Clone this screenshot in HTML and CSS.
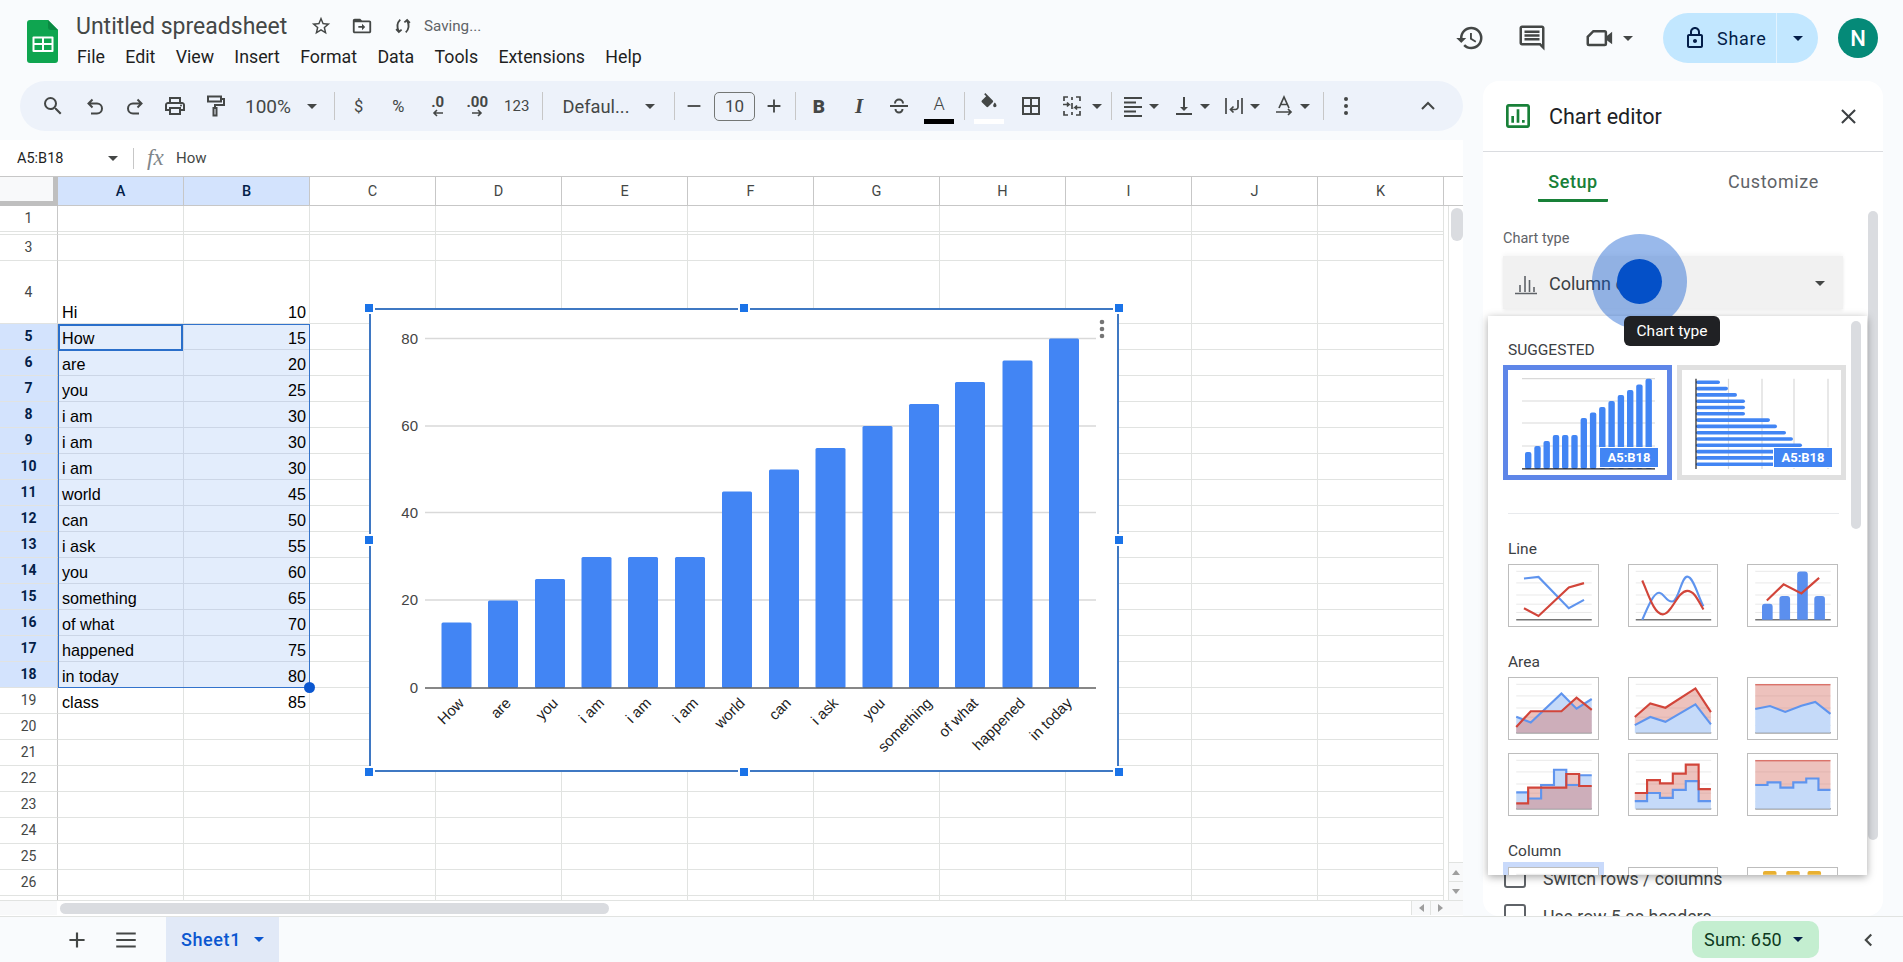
FILE: index.html
```html
<!DOCTYPE html>
<html lang="en">
<head>
<meta charset="utf-8">
<title>Untitled spreadsheet</title>
<link rel="stylesheet" href="styles.css">
</head>
<body>
<svg class="defs" width="0" height="0" aria-hidden="true">
  <symbol id="g5" viewBox="0 0 91 63"><path d="M7 6.5H85M7 18.5H85M7 31H85M7 40.500H85M7 49H85" stroke="#e8e8e8" stroke-width="1" fill="none"/><path d="M7 56.500H85" stroke="#757575" stroke-width="1.500" fill="none"/></symbol>
</svg>
<header class="top">
  <svg class="logo" viewBox="0 0 31 43"><path d="M3 0H21L31 10V40a3 3 0 0 1-3 3H3a3 3 0 0 1-3-3V3a3 3 0 0 1 3-3z" fill="#0fa550"/><path d="M21 0L31 10H24a3 3 0 0 1-3-3z" fill="#0a8a42"/><rect x="5.500" y="16.500" width="21" height="15.500" rx="1" fill="#fff"/><path d="M7.500 18.500h7.500v4.500h-7.500zM17 18.500h7.500v4.500H17zM7.500 25h7.500v5h-7.500zM17 25h7.500v5H17z" fill="#0fa550"/></svg>
  <div class="titles">
    <div class="title-row">
      <span class="doc-title">Untitled spreadsheet</span>
      <svg class="ti first" viewBox="0 0 24 24"><path d="M22 9.240l-7.190-.620L12 2 9.190 8.630 2 9.240l5.460 4.730L5.820 21 12 17.270 18.180 21l-1.630-7.030L22 9.240zM12 15.400l-3.760 2.270 1-4.280-3.320-2.880 4.380-.380L12 6.100l1.710 4.040 4.380.380-3.320 2.880 1 4.280L12 15.400z"/></svg>
      <svg class="ti" viewBox="0 0 24 24"><path d="M20 6h-8l-2-2H4c-1.100 0-2 .9-2 2v12c0 1.100.9 2 2 2h16c1.100 0 2-.9 2-2V8c0-1.100-.9-2-2-2zm0 12H4V8h16v10zM12 9.500l3.500 3.500-3.500 3.500V14H8v-2h4z"/></svg>
      <svg class="ti" viewBox="0 0 24 24"><path d="M9 5C6 8 5 13 7.500 18M15 19c3-3 4-8 1.500-13M4.500 15.500l3 3 3-2.500M19.500 8.500l-3-3-3 2.500" fill="none" stroke="#444746" stroke-width="2"/></svg>
      <span class="saving">Saving...</span>
    </div>
    <nav class="menu"><span>File</span><span>Edit</span><span>View</span><span>Insert</span><span>Format</span><span>Data</span><span>Tools</span><span>Extensions</span><span>Help</span></nav>
  </div>
  <div class="actions">
    <svg class="ai" viewBox="0 0 24 24"><path d="M13 3a9 9 0 0 0-9 9H1l3.890 3.890.07.14L9 12H6c0-3.870 3.130-7 7-7s7 3.130 7 7-3.130 7-7 7c-1.930 0-3.680-.79-4.940-2.060l-1.420 1.420A8.954 8.954 0 0 0 13 21a9 9 0 0 0 0-18zm-1 5v5l4.280 2.540.72-1.210-3.500-2.080V8H12z"/></svg>
    <svg class="ai ai-comment" viewBox="0 0 24 24"><path d="M20 2H4c-1.100 0-2 .9-2 2v12c0 1.100.9 2 2 2h14l4 4V4c0-1.100-.9-2-2-2zm0 15.170L18.830 16H4V4h16v13.170zM6 12h12v2H6zm0-3h12v2H6zm0-3h12v2H6z"/></svg>
    <svg class="ai ai-meet" viewBox="0 0 24 24"><path d="M7.500 6.500H16.500a1 1 0 0 1 1 1v9a1 1 0 0 1-1 1H4a1 1 0 0 1-1-1V11z" fill="none" stroke="#444746" stroke-width="2"/><path d="M18 10.500L22.500 7v10L18 13.500z"/></svg>
    <i class="caret meet-caret"></i>
    <div class="share">
      <div class="share-main">
        <svg class="lock" viewBox="0 0 24 24"><path d="M18 8h-1V6c0-2.760-2.240-5-5-5S7 3.240 7 6v2H6c-1.100 0-2 .9-2 2v10c0 1.100.9 2 2 2h12c1.100 0 2-.9 2-2V10c0-1.100-.9-2-2-2zM9 6c0-1.660 1.340-3 3-3s3 1.340 3 3v2H9V6zm9 14H6V10h12v10zm-6-3c1.100 0 2-.9 2-2s-.9-2-2-2-2 .9-2 2 .9 2 2 2z"/></svg>
        <span>Share</span>
      </div>
      <div class="share-drop"><i class="caret dark"></i></div>
    </div>
    <div class="avatar">N</div>
  </div>
</header>

<main class="main">
  <section class="left">
    <div class="toolbar">
      <span class="tb"><svg viewBox="0 0 24 24"><path d="M15.500 14h-.79l-.28-.27A6.471 6.471 0 0 0 16 9.500 6.500 6.500 0 1 0 9.500 16c1.610 0 3.090-.59 4.230-1.570l.27.28v.79l5 4.990L20.490 19l-4.990-5zm-6 0C7.010 14 5 11.990 5 9.500S7.010 5 9.500 5 14 7.010 14 9.500 11.990 14 9.500 14z"/></svg></span>
      <span class="tb m2"><svg viewBox="0 0 24 24"><path d="M9.500 5.500L5.500 9.500l4 4M5.500 9.500H14a5 5 0 0 1 0 10H8" class="st"/></svg></span>
      <span class="tb"><svg viewBox="0 0 24 24"><path d="M14.500 5.500l4 4-4 4M18.500 9.500H10a5 5 0 0 0 0 10h6" class="st"/></svg></span>
      <span class="tb"><svg viewBox="0 0 24 24"><path d="M19 8h-1V3H6v5H5c-1.660 0-3 1.340-3 3v6h4v4h12v-4h4v-6c0-1.660-1.340-3-3-3zM8 5h8v3H8V5zm8 14H8v-4h8v4zm2-4v-2H6v2H4v-4c0-.55.45-1 1-1h14c.55 0 1 .45 1 1v4h-2z"/><circle cx="18" cy="11.500" r="1"/></svg></span>
      <span class="tb"><svg viewBox="0 0 24 24"><path d="M5 2.500h13v5H5zM18 5h3v6h-9v3M10.500 14h3v7.500h-3z" class="st"/></svg></span>
      <span class="zoom-val">100%</span>
      <span class="tc z-caret"><i class="caret"></i></span>
      <i class="sep s12"></i>
      <span class="tf m4">$</span>
      <span class="tf">%</span>
      <span class="tf dec"><b>.0</b><svg viewBox="0 0 16 8"><path d="M13 4H4M7 1L4 4l3 3" class="st"/></svg></span>
      <span class="tf dec"><b>.00</b><svg viewBox="0 0 16 8"><path d="M3 4h9M9 1l3 3-3 3" class="st"/></svg></span>
      <span class="tf n123">123</span>
      <i class="sep s5"></i>
      <span class="font-name">Defaul...</span>
      <span class="tc f-caret"><i class="caret"></i></span>
      <i class="sep s14"></i>
      <span class="pm m3"><svg viewBox="0 0 24 24"><path d="M5 12h14" class="st"/></svg></span>
      <span class="fsize">10</span>
      <span class="pm m3b"><svg viewBox="0 0 24 24"><path d="M5 12h14M12 5v14" class="st"/></svg></span>
      <i class="sep s5"></i>
      <span class="tb m3"><b class="bold">B</b></span>
      <span class="tb"><i class="ital">I</i></span>
      <span class="tb"><svg viewBox="0 0 24 24"><path d="M3 12h18M8 9.500a4 4 0 0 1 8 0M8.500 15a3.500 3.500 0 0 0 7 0" class="st"/></svg></span>
      <span class="tb col-a"><span>A</span><i class="bar black"></i></span>
      <i class="sep s5"></i>
      <span class="tb m4 col-a"><svg viewBox="0 0 24 24"><path d="M16.560 8.940L7.620 0 6.210 1.410l2.380 2.380-5.150 5.150c-.59.59-.59 1.540 0 2.120l5.500 5.500c.29.29.68.44 1.060.44s.77-.15 1.060-.44l5.500-5.500c.59-.58.59-1.530 0-2.120zM19 11.500s-2 2.170-2 3.500c0 1.100.9 2 2 2s2-.9 2-2c0-1.330-2-3.500-2-3.500z"/></svg><i class="bar white"></i></span>
      <span class="tb m2"><svg viewBox="0 0 24 24"><path d="M3 3v18h18V3H3zm8 16H5v-6h6v6zm0-8H5V5h6v6zm8 8h-6v-6h6v6zm0-8h-6V5h6v6z"/></svg></span>
      <span class="pair pair-wide m5"><svg viewBox="0 0 24 24"><path d="M8 3H4v4M4 17v4h4M16 3h4v4M20 17v4h-4M3 10.500h6l-2-2M9 10.500l-2 2M21 13.500h-6l2-2M15 13.500l2 2M12 3v3M12 9v6M12 18v3" class="st"/></svg><span class="cbox"><i class="caret"></i></span></span>
      <i class="sep s3"></i>
      <span class="pair m9"><svg viewBox="0 0 24 24"><path d="M3 3h18v2H3zM3 7.500h12v2H3zM3 12h18v2H3zM3 16.500h12v2H3zM3 21h18v2H3z"/></svg><span class="cbox"><i class="caret"></i></span></span>
      <span class="pair m9"><svg viewBox="0 0 24 24"><path d="M16 13h-3V3h-2v10H8l4 4 4-4zM4 19v2h16v-2H4z"/></svg><span class="cbox"><i class="caret"></i></span></span>
      <span class="pair m8"><svg viewBox="0 0 24 24"><path d="M4 4v16M20 4v16M16 6v7a2.500 2.500 0 0 1-2.500 2.500H9M11.500 12.500l-3 3 3 3" class="st"/></svg><span class="cbox"><i class="caret"></i></span></span>
      <span class="pair m8"><svg viewBox="0 0 24 24"><path d="M7 14L12 3l5 11M8.800 10.500h6.400M4 18h15M16 15l3 3-3 3" class="st"/></svg><span class="cbox"><i class="caret"></i></span></span>
      <i class="sep s9"></i>
      <span class="dots-tb"><svg viewBox="0 0 24 24"><circle cx="12" cy="5" r="2"/><circle cx="12" cy="12" r="2"/><circle cx="12" cy="19" r="2"/></svg></span>
      <span class="chev"><svg viewBox="0 0 24 24"><path d="M6 15l6-6 6 6" class="st"/></svg></span>
    </div>

    <div class="formula">
      <span class="namebox">A5:B18</span><i class="caret nb-caret"></i>
      <i class="fsep"></i>
      <span class="fx">fx</span>
      <span class="fval">How</span>
    </div>

    <div class="sheet">
      <div class="colhead">
        <div class="corner"></div>
        <div class="ch on">A</div><div class="ch on">B</div><div class="ch">C</div><div class="ch">D</div><div class="ch">E</div><div class="ch">F</div><div class="ch">G</div><div class="ch">H</div><div class="ch">I</div><div class="ch">J</div><div class="ch">K</div>
      </div>
      <div class="body">
        <div class="grid">
          <div class="row"><div class="rh">1</div><div class="cells"></div></div>
          <div class="row hidden-row"><div class="rh"></div><div class="cells"></div></div>
          <div class="row"><div class="rh">3</div><div class="cells"></div></div>
          <div class="row tall"><div class="rh">4</div><div class="cells"><div class="c">Hi</div><div class="c n">10</div></div></div>
          <div class="row sel"><div class="rh">5</div><div class="cells"><div class="c">How</div><div class="c n">15</div></div></div>
          <div class="row sel"><div class="rh">6</div><div class="cells"><div class="c">are</div><div class="c n">20</div></div></div>
          <div class="row sel"><div class="rh">7</div><div class="cells"><div class="c">you</div><div class="c n">25</div></div></div>
          <div class="row sel"><div class="rh">8</div><div class="cells"><div class="c">i am</div><div class="c n">30</div></div></div>
          <div class="row sel"><div class="rh">9</div><div class="cells"><div class="c">i am</div><div class="c n">30</div></div></div>
          <div class="row sel"><div class="rh">10</div><div class="cells"><div class="c">i am</div><div class="c n">30</div></div></div>
          <div class="row sel"><div class="rh">11</div><div class="cells"><div class="c">world</div><div class="c n">45</div></div></div>
          <div class="row sel"><div class="rh">12</div><div class="cells"><div class="c">can</div><div class="c n">50</div></div></div>
          <div class="row sel"><div class="rh">13</div><div class="cells"><div class="c">i ask</div><div class="c n">55</div></div></div>
          <div class="row sel"><div class="rh">14</div><div class="cells"><div class="c">you</div><div class="c n">60</div></div></div>
          <div class="row sel"><div class="rh">15</div><div class="cells"><div class="c">something</div><div class="c n">65</div></div></div>
          <div class="row sel"><div class="rh">16</div><div class="cells"><div class="c">of what</div><div class="c n">70</div></div></div>
          <div class="row sel"><div class="rh">17</div><div class="cells"><div class="c">happened</div><div class="c n">75</div></div></div>
          <div class="row sel"><div class="rh">18</div><div class="cells"><div class="c">in today</div><div class="c n">80</div></div></div>
          <div class="row"><div class="rh">19</div><div class="cells"><div class="c">class</div><div class="c n">85</div></div></div>
          <div class="row"><div class="rh">20</div><div class="cells"></div></div>
          <div class="row"><div class="rh">21</div><div class="cells"></div></div>
          <div class="row"><div class="rh">22</div><div class="cells"></div></div>
          <div class="row"><div class="rh">23</div><div class="cells"></div></div>
          <div class="row"><div class="rh">24</div><div class="cells"></div></div>
          <div class="row"><div class="rh">25</div><div class="cells"></div></div>
          <div class="row"><div class="rh">26</div><div class="cells"></div></div>
          <div class="row"><div class="rh"></div><div class="cells"></div></div>

          <div class="range"><div class="active"></div><i class="fill-handle"></i></div>

          <div class="chart">
            <svg class="chart-svg" viewBox="0 0 750 464" width="750" height="464">
              <path d="M56 30.500H727M56 118H727M56 204.500H727M56 292H727" stroke="#d9d9d9" stroke-width="1.500" fill="none"/>
              <g fill="#4285f4">
                <rect x="72.500" y="314.500" width="30" height="65.500" rx="1.500"/>
                <rect x="119" y="292.500" width="30" height="87.500" rx="1.500"/>
                <rect x="166" y="271" width="30" height="109" rx="1.500"/>
                <rect x="212.500" y="249" width="30" height="131" rx="1.500"/>
                <rect x="259" y="249" width="30" height="131" rx="1.500"/>
                <rect x="306" y="249" width="30" height="131" rx="1.500"/>
                <rect x="353" y="183.500" width="30" height="196.500" rx="1.500"/>
                <rect x="400" y="161.500" width="30" height="218.500" rx="1.500"/>
                <rect x="446.500" y="140" width="30" height="240" rx="1.500"/>
                <rect x="493.500" y="118" width="30" height="262" rx="1.500"/>
                <rect x="540" y="96" width="30" height="284" rx="1.500"/>
                <rect x="586" y="74" width="30" height="306" rx="1.500"/>
                <rect x="633.500" y="52.500" width="30" height="327.500" rx="1.500"/>
                <rect x="680" y="30.500" width="30" height="349.500" rx="1.500"/>
              </g>
              <path d="M56 380H727" stroke="#5f5f5f" stroke-width="1.500" fill="none"/>
              <g class="ax-y">
                <text x="49" y="35.500">80</text><text x="49" y="123">60</text><text x="49" y="209.500">40</text><text x="49" y="297">20</text><text x="49" y="385">0</text>
              </g>
              <g class="ax-x">
                <text transform="translate(96 396) rotate(-45)">How</text>
                <text transform="translate(143 396) rotate(-45)">are</text>
                <text transform="translate(190 396) rotate(-45)">you</text>
                <text transform="translate(236 396) rotate(-45)">i am</text>
                <text transform="translate(283 396) rotate(-45)">i am</text>
                <text transform="translate(330 396) rotate(-45)">i am</text>
                <text transform="translate(377 396) rotate(-45)">world</text>
                <text transform="translate(423 396) rotate(-45)">can</text>
                <text transform="translate(470 396) rotate(-45)">i ask</text>
                <text transform="translate(517 396) rotate(-45)">you</text>
                <text transform="translate(564 396) rotate(-45)">something</text>
                <text transform="translate(610 396) rotate(-45)">of what</text>
                <text transform="translate(657 396) rotate(-45)">happened</text>
                <text transform="translate(704 396) rotate(-45)">in today</text>
              </g>
              <g fill="#757575"><circle cx="733" cy="14" r="2.300"/><circle cx="733" cy="21" r="2.300"/><circle cx="733" cy="28" r="2.300"/></g>
            </svg>
            <i class="h h-tl"></i><i class="h h-tm"></i><i class="h h-tr"></i><i class="h h-ml"></i><i class="h h-mr"></i><i class="h h-bl"></i><i class="h h-bm"></i><i class="h h-br"></i>
          </div>
        </div>
        <div class="vscroll">
          <div class="vthumb"></div>
          <div class="varrows"><span class="arr"><i class="tri up"></i></span><span class="arr"><i class="tri down"></i></span></div>
        </div>
      </div>
      <div class="hscroll">
        <div class="hleft"></div>
        <div class="htrack"><div class="hthumb"></div></div>
        <span class="arr wide"><i class="tri lt"></i></span><span class="arr wide"><i class="tri rt"></i></span><span class="arr last"></span>
      </div>
    </div>
  </section>

  <aside class="panel">
    <div class="p-head">
      <svg class="p-icon" viewBox="3 3 18 18"><path d="M19 3H5c-1.100 0-2 .9-2 2v14c0 1.100.9 2 2 2h14c1.100 0 2-.9 2-2V5c0-1.100-.9-2-2-2zm0 16H5V5h14v14zM7 12h2v5H7zm4-5h2v10h-2zm4 8h2v2h-2z"/></svg>
      <span class="p-title">Chart editor</span>
      <svg class="p-close" viewBox="0 0 24 24"><path d="M19 6.410L17.590 5 12 10.590 6.410 5 5 6.410 10.590 12 5 17.590 6.410 19 12 13.410 17.590 19 19 17.590 13.410 12z"/></svg>
    </div>
    <div class="p-tabs">
      <span class="tab on">Setup</span>
      <span class="tab cust">Customize</span>
    </div>
    <div class="p-body">
      <div class="p-label">Chart type</div>
      <div class="dropdown">
        <svg class="dd-icon" viewBox="0 0 24 24"><path d="M1 21.500h22M6 20v-7M11 20V4M15.500 20V8M20 20v-5" fill="none" stroke="#5f6368" stroke-width="1.600"/></svg>
        <span class="dd-text">Column chart</span>
        <i class="caret dd-caret"></i>
      </div>
      <label class="check first-check"><i class="box"></i><span>Switch rows / columns</span></label>
      <label class="check"><i class="box"></i><span>Use row 5 as headers</span></label>
    </div>
    <div class="p-scroll"></div>

    <div class="popup">
      <div class="pop-scroll"></div>
      <div class="pop-label">SUGGESTED</div>
      <div class="sugg">
        <div class="sg active-sg">
          <svg viewBox="0 0 159 105" width="159" height="105">
            <path d="M14 8.700H147M14 31H147M14 53H147M14 76H147" stroke="#d9d9d9" stroke-width="1.200" fill="none"/>
            <g fill="#4285f4">
              <rect x="17" y="82" width="6.400" height="17" rx="2"/><rect x="26.300" y="76" width="6.400" height="23" rx="2"/><rect x="35.500" y="71" width="6.400" height="28" rx="2"/><rect x="44.800" y="65" width="6.400" height="34" rx="2"/><rect x="54" y="65" width="6.400" height="34" rx="2"/><rect x="63.300" y="65" width="6.400" height="34" rx="2"/><rect x="72.600" y="48" width="6.400" height="51" rx="2"/><rect x="81.900" y="42.500" width="6.400" height="56.500" rx="2"/><rect x="91.100" y="37" width="6.400" height="62" rx="2"/><rect x="100.400" y="31" width="6.400" height="68" rx="2"/><rect x="109.700" y="25" width="6.400" height="74" rx="2"/><rect x="119" y="20" width="6.400" height="79" rx="2"/><rect x="128.200" y="14.500" width="6.400" height="84.500" rx="2"/><rect x="137.500" y="8.700" width="6.400" height="90.300" rx="2"/>
            </g>
            <path d="M14 98.800H147" stroke="#202124" stroke-width="1.200"/>
          </svg>
          <span class="badge">A5:B18</span>
        </div>
        <div class="sg">
          <svg viewBox="0 0 159 105" width="159" height="105">
            <path d="M46.500 8.700V99M80 8.700V99M112 8.700V99M146 8.700V99" stroke="#d9d9d9" stroke-width="1.200" fill="none"/>
            <g fill="#4285f4">
              <rect x="14" y="10.500" width="24" height="3.600" rx="1.800"/><rect x="14" y="16.800" width="32" height="3.600" rx="1.800"/><rect x="14" y="23.100" width="41" height="3.600" rx="1.800"/><rect x="14" y="29.400" width="49" height="3.600" rx="1.800"/><rect x="14" y="35.700" width="49" height="3.600" rx="1.800"/><rect x="14" y="42" width="49" height="3.600" rx="1.800"/><rect x="14" y="48.300" width="74" height="3.600" rx="1.800"/><rect x="14" y="54.600" width="81" height="3.600" rx="1.800"/><rect x="14" y="60.900" width="90" height="3.600" rx="1.800"/><rect x="14" y="67.200" width="97" height="3.600" rx="1.800"/><rect x="14" y="73.500" width="106" height="3.600" rx="1.800"/><rect x="14" y="79.800" width="114" height="3.600" rx="1.800"/><rect x="14" y="86.100" width="122" height="3.600" rx="1.800"/><rect x="14" y="92.400" width="131" height="3.600" rx="1.800"/>
            </g>
            <path d="M14 8.700V99" stroke="#202124" stroke-width="1.200"/>
          </svg>
          <span class="badge">A5:B18</span>
        </div>
      </div>
      <div class="pop-div"></div>

      <div class="pop-label sect">Line</div>
      <div class="thumbs">
        <svg class="th" viewBox="0 0 91 63"><use href="#g5"/><path d="M15 14L30 12.300 61.300 44.700 77 36" class="bl"/><path d="M15 44.700L30 52.700 61.300 23.300 77 18.700" class="rd"/></svg>
        <svg class="th" viewBox="0 0 91 63"><use href="#g5"/><path d="M13.700 56.700C20 42 26 28 31.300 28.700S38 38 44.700 37.700 54 12 60.300 12 72 34 77 42.700" class="bl"/><path d="M13.700 16C20 30 26 51 35 51S50 26.700 60.300 26.700C68 26.700 72 38 77 46" class="rd"/></svg>
        <svg class="th" viewBox="0 0 91 63"><use href="#g5"/><g fill="#5b8fee"><path d="M14 56.500V43a3 3 0 0 1 3-3h5a3 3 0 0 1 3 3v13.500zM32 56.500V35a3 3 0 0 1 3-3h5a3 3 0 0 1 3 3v21.500zM50.300 56.500V9.700a3 3 0 0 1 3-3h5a3 3 0 0 1 3 3v46.800zM68 56.500V35a3 3 0 0 1 3-3h5a3 3 0 0 1 3 3v21.500z"/></g><path d="M19 36.700L36.300 20 54.700 29.300 73 13.300" class="rd"/></svg>
      </div>

      <div class="pop-label sect">Area</div>
      <div class="thumbs t-a1">
        <svg class="th" viewBox="0 0 91 63"><use href="#g5"/><path d="M7 40L22 46 53.700 16 69.300 31.700 85 21.700V56.500H7z" class="fb"/><path d="M7 50.700L22 34.300H53.700L69.300 20.300 85 33V56.500H7z" class="fr"/><path d="M7 40L22 46 53.700 16 69.300 31.700 85 21.700" class="bl"/><path d="M7 50.700L22 34.300H53.700L69.300 20.300 85 33" class="rd"/></svg>
        <svg class="th" viewBox="0 0 91 63"><use href="#g5"/><path d="M6 48.700L22 40.300 37.700 45.300 68.700 27.300 84.700 48V56.500H6z" class="fb"/><path d="M6 40.300L22 26.300 37.700 30.700 68.700 10.700 84.700 35.300V48L68.700 27.300 37.700 45.300 22 40.300 6 48.700z" class="fr"/><path d="M6 48.700L22 40.300 37.700 45.300 68.700 27.300 84.700 48" class="bl"/><path d="M6 40.300L22 26.300 37.700 30.700 68.700 10.700 84.700 35.300" class="rd"/></svg>
        <svg class="th" viewBox="0 0 91 63"><use href="#g5"/><path d="M7 32L22.300 29 38 35 54.700 28.700 69 24.700 84.700 37V56.500H7z" class="fb"/><path d="M7 7H84.700V37L69 24.700 54.700 28.700 38 35 22.300 29 7 32z" class="fr"/><path d="M7 7H84.700" class="rd thin"/><path d="M7 32L22.300 29 38 35 54.700 28.700 69 24.700 84.700 37" class="bl"/></svg>
      </div>
      <div class="thumbs t-a2">
        <svg class="th" viewBox="0 0 91 63"><use href="#g5"/><path d="M7 39.700H19.300V46H32.700V32H46V16.300H58.700V32H72V22H85V56.500H7z" class="fb"/><path d="M7 51H19.300V34.700H58.700V20.700H72V33H85V56.500H7z" class="fr"/><path d="M7 39.700H19.300V46H32.700V32H46V16.300H58.700V32H72V22H85" class="bl"/><path d="M7 51H19.300V34.700H58.700V20.700H72V33H85" class="rd"/></svg>
        <svg class="th" viewBox="0 0 91 63"><use href="#g5"/><path d="M6 48.700H18.700V40.300H32V45.300H45.300V37H58.700V28H72V48.700H84.700V56.500H6z" class="fb"/><path d="M6 40.300H18.700V27H32V30.300H45.300V20.300H58.700V11H72V36.300H84.700V48.700H72V28H58.700V37H45.300V45.300H32V40.300H18.700V48.700H6z" class="fr"/><path d="M6 48.700H18.700V40.300H32V45.300H45.300V37H58.700V28H72V48.700H84.700" class="bl"/><path d="M6 40.300H18.700V27H32V30.300H45.300V20.300H58.700V11H72V36.300H84.700" class="rd"/></svg>
        <svg class="th" viewBox="0 0 91 63"><use href="#g5"/><path d="M7 32H19.700V29.300H33V34.700H46.300V29.300H59.700V25.300H72.300V37H84.700V56.500H7z" class="fb"/><path d="M7 7H84.700V37H72.300V25.300H59.700V29.300H46.300V34.700H33V29.300H19.700V32H7z" class="fr"/><path d="M7 7H84.700" class="rd thin"/><path d="M7 32H19.700V29.300H33V34.700H46.300V29.300H59.700V25.300H72.300V37H84.700" class="bl"/></svg>
      </div>

      <div class="pop-label sect">Column</div>
      <div class="thumbs t-c">
        <svg class="th picked" viewBox="0 0 91 63"><use href="#g5"/></svg>
        <svg class="th" viewBox="0 0 91 63"><use href="#g5"/></svg>
        <svg class="th" viewBox="0 0 91 63"><path d="M15 7V5a2 2 0 0 1 2-2h10a2 2 0 0 1 2 2v2zM39 7V5a2 2 0 0 1 2-2h10a2 2 0 0 1 2 2v2zM61 7V5a2 2 0 0 1 2-2h10a2 2 0 0 1 2 2v2z" fill="#e8b032"/></svg>
      </div>
    </div>

    <div class="click"><div class="click-dot"></div></div>
    <div class="tooltip">Chart type</div>
  </aside>
</main>

<footer class="bottom">
  <svg class="bi plus" viewBox="0 0 24 24"><path d="M19 13h-6v6h-2v-6H5v-2h6V5h2v6h6v2z"/></svg>
  <svg class="bi burger" viewBox="0 0 24 24"><path d="M3 5h18v2H3zM3 11h18v2H3zM3 17h18v2H3z"/></svg>
  <div class="sheet-tab"><span>Sheet1</span><i class="caret blue"></i></div>
  <div class="sum"><span>Sum: 650</span><i class="caret dark"></i></div>
  <svg class="bi coll" viewBox="0 0 24 24"><path d="M15 7l-5 5 5 5" class="st"/></svg>
</footer>
</body>
</html>
```

FILE: styles.css
```css
*{box-sizing:border-box}
html,body{margin:0;padding:0}
body{width:1903px;height:962px;overflow:hidden;background:#f9fbfd;display:flex;flex-direction:column;font-family:Roboto,"Liberation Sans",sans-serif;color:#1f1f1f}
.defs{position:absolute}
i{font-style:normal;display:block}
svg{display:block;fill:#444746}
.st{fill:none;stroke:#444746;stroke-width:2}

.caret{width:0;height:0;border-left:5.500px solid transparent;border-right:5.500px solid transparent;border-top:5.500px solid #444746}
.caret.dark{border-top-color:#041e49}
.caret.blue{border-top-color:#0b57d0}

/* top bar */
.top{height:81px;flex:none;display:flex;align-items:flex-start}
.logo{width:31px;height:43px;margin:20px 0 0 27px;flex:none}
.titles{margin-left:18px;padding-top:12px}
.title-row{display:flex;align-items:center;height:28px}
.doc-title{font-size:23px;color:#444746;width:209px;white-space:nowrap}
.ti{width:22px;height:22px;margin-left:19px;flex:none}
.ti.first{margin-left:25px}
.saving{font-size:15.200px;color:#5f6368;margin-left:10px}
.menu{display:flex;gap:20.300px;margin-top:5px;font-size:17.800px;line-height:24px;color:#1f1f1f;padding-left:1px}
.actions{margin-left:auto;margin-top:13px;padding-right:25px;display:flex;align-items:center;height:50px}
.ai{width:30px;height:30px;flex:none}
.ai-comment{margin-left:32px}
.ai-meet{margin-left:37px}
.meet-caret{margin-left:9px}
.share{display:flex;height:50px;margin-left:30px;width:155px;border-radius:25px;background:#c2e7ff;overflow:hidden}
.share-main{width:114px;display:flex;align-items:center;padding-left:20px;border-right:1px solid #e3f3ff;font-size:18px;font-weight:400;letter-spacing:.7px;color:#041e49}
.lock{width:24px;height:24px;fill:#041e49;margin-right:10px}
.share-drop{flex:1;display:flex;align-items:center;justify-content:center}
.avatar{width:40px;height:40px;margin-left:20px;border-radius:50%;background:#058a78;color:#fff;font-size:22px;font-weight:500;display:flex;align-items:center;justify-content:center}

/* layout */
.main{height:835px;flex:none;display:flex}
.left{width:1463px;flex:none;display:flex;flex-direction:column}

/* toolbar */
.toolbar{height:50px;margin-left:20px;padding-left:13px;background:#edf2fa;border-radius:25px;display:flex;align-items:center;color:#444746}
.tb{width:40px;height:36px;flex:none;display:flex;flex-direction:column;align-items:center;justify-content:center;position:relative}
.tb svg{width:24px;height:24px}
.m2{margin-left:2px}.m3{margin-left:3px}.m3b{margin-left:3px}.m4{margin-left:4px}.m5{margin-left:9.400px}.m8{margin-left:8px}.m9{margin-left:9px}
.zoom-val{width:46px;margin-left:10px;font-size:19px;flex:none;color:#444746;white-space:nowrap}
.tc{width:20px;flex:none;display:flex;justify-content:center}
.z-caret{margin-left:11px}
.f-caret{margin-left:11.500px}
.sep{width:1px;height:28px;background:#c7c7c7;flex:none}
.s3{margin-left:.3px}.s5{margin-left:5px}.s9{margin-left:9.500px}.s12{margin-left:12px}.s14{margin-left:14px}
.tf{width:39.500px;flex:none;text-align:center;font-size:16.500px;color:#444746}
.n123{font-size:15px}
.dec{display:flex;flex-direction:column;align-items:center;line-height:13px}
.dec b{font-size:15px;font-weight:700}
.dec svg{width:16px;height:8px}
.dec .st{stroke-width:1.600}
.font-name{width:66px;margin-left:20px;font-size:18.300px;flex:none;color:#444746;white-space:nowrap}
.pm{width:32px;flex:none;display:flex;justify-content:center}
.pm svg{width:22px;height:22px}
.fsize{width:41px;height:29px;margin-left:4px;border:1px solid #747775;border-radius:5px;font-size:17px;display:flex;align-items:center;justify-content:center;flex:none}
.bold{font-size:19px;font-weight:900;font-family:Roboto,sans-serif}
.ital{font-size:21px;font-weight:700;font-style:italic;font-family:"Liberation Serif",serif}
.col-a{font-size:18px}
.col-a svg{width:22px;height:20px;margin-top:-6px}
.col-a span{line-height:20px;margin-top:-4px;font-weight:300}
.bar{position:absolute;left:5px;bottom:0;width:30px;height:5px}
.bar.black{background:#000}
.bar.white{background:#fff}
.pair{display:flex;align-items:center;width:42px;flex:none}
.pair svg{width:24px;height:24px;flex:none}
.pair .st{stroke-width:1.700}
.cbox{width:18px;display:flex;justify-content:center;flex:none}
.pair-wide{width:50px}
.pair-wide .cbox{width:26px}
.dots-tb{width:24px;margin-left:10px;flex:none}
.dots-tb svg{width:24px;height:24px}
.chev{width:24px;margin-left:58px;flex:none}
.chev svg{width:24px;height:24px}

/* formula bar */
.formula{height:36px;margin-top:9px;background:#fff;display:flex;align-items:center;flex:none;padding-left:17px}
.namebox{width:90px;font-size:14.500px;color:#1f1f1f}
.nb-caret{margin-left:1px}
.fsep{width:1px;height:21px;background:#c7c7c7;margin-left:15px}
.fx{font-family:"Liberation Serif",serif;font-style:italic;font-size:23px;color:#80868b;margin-left:13px;width:29px}
.fval{font-size:15px;color:#444746}

/* sheet */
.sheet{flex:1;display:flex;flex-direction:column;background:#fff;min-height:0}
.colhead{height:30px;flex:none;display:flex;border-top:1px solid #c7c7c7;border-bottom:1px solid #c7c7c7}
.corner{width:58px;flex:none;background:#f8f9fa;border-right:5px solid #bfbfbf;border-bottom:5px solid #bfbfbf;margin-bottom:-1px}
.ch{width:126px;flex:none;display:flex;align-items:center;justify-content:center;font-size:14.500px;color:#444746;border-right:1px solid #c7c7c7}
.ch.on{background:#d3e3fd;color:#041e49;font-weight:500}
.body{height:694px;display:flex;flex:none}
.grid{width:1448px;flex:none;position:relative;overflow:hidden}
.row{height:26px;display:flex;position:relative}
.hidden-row{height:3px}
.tall{height:63px}
.rh{width:58px;flex:none;display:flex;align-items:center;justify-content:center;font-size:14px;color:#444746;border-right:1px solid #c7c7c7;border-bottom:1px solid #e1e3e1;padding-bottom:1px}
.cells{width:1386px;flex:none;display:grid;grid-template-columns:126px 126px;border-bottom:1px solid #e1e3e1;background-image:repeating-linear-gradient(90deg,transparent 0 125px,#e1e3e1 125px 126px)}
.c{font-family:"Liberation Sans",Arial,sans-serif;font-size:16.200px;line-height:21px;padding:0 3px 0 4px;color:#000;border-right:1px solid #e1e3e1;align-self:end;height:100%;display:flex;align-items:flex-end;overflow:hidden}
.n{justify-content:flex-end}
.sel .rh{background:#d3e3fd;color:#041e49;font-weight:700}
.sel .c{background:#e3edfc;border-right-color:#ccd6e6;box-shadow:0 1px 0 #ccd6e6}
.range{position:absolute;left:58px;top:118px;width:252px;height:364px;border:1px solid #3273cc}
.active{width:125px;height:27px;border:2px solid #2a6fca;margin:-1px 0 0 -1px}
.fill-handle{position:absolute;right:-5.500px;bottom:-5.500px;width:11px;height:11px;border-radius:50%;background:#0b57d0}

/* chart */
.chart{position:absolute;left:369px;top:102px;width:750px;height:464px;background:#fff;border:2px solid #3f78c3}
.chart-svg{position:absolute;left:-2px;top:-2px}
.ax-y text{font:15px "Liberation Sans",Arial,sans-serif;fill:#444;text-anchor:end}
.ax-x text{font:15px "Liberation Sans",Arial,sans-serif;fill:#222;text-anchor:end}
.h{position:absolute;width:12px;height:12px;background:#1a73e8;border:2px solid #fff}
.h-tl,.h-ml,.h-bl{left:-8px}
.h-tm,.h-bm{left:367px}
.h-tr,.h-mr,.h-br{right:-8px}
.h-tl,.h-tm,.h-tr{top:-8px}
.h-ml,.h-mr{top:224px}
.h-bl,.h-bm,.h-br{bottom:-8px}

/* scrollbars */
.vscroll{width:15px;flex:none;background:#fff;border-left:1px solid #e1e3e1;position:relative;display:flex;flex-direction:column;justify-content:flex-end}
.vthumb{position:absolute;left:2px;top:2px;width:12px;height:33px;border-radius:6px;background:#dadce0}
.varrows{display:flex;flex-direction:column}
.arr{height:19px;display:flex;align-items:center;justify-content:center;background:#f8f9fa;border-top:1px solid #e1e3e1}
.arr.wide{width:19px;flex:none;border-left:1px solid #e1e3e1}
.arr.last{width:14px;flex:none}
.tri{width:0;height:0}
.tri.up{border-left:4px solid transparent;border-right:4px solid transparent;border-bottom:5px solid #9e9e9e}
.tri.down{border-left:4px solid transparent;border-right:4px solid transparent;border-top:5px solid #9e9e9e}
.tri.lt{border-top:4px solid transparent;border-bottom:4px solid transparent;border-right:5px solid #9e9e9e}
.tri.rt{border-top:4px solid transparent;border-bottom:4px solid transparent;border-left:5px solid #9e9e9e}
.hscroll{height:15px;flex:none;display:flex;border-top:1px solid #e1e3e1}
.hleft{width:57px;background:#f8f9fa;flex:none}
.htrack{flex:1;padding:2px 3px}
.hthumb{width:549px;height:11px;border-radius:6px;background:#dadce0}
.hscroll .arr{height:14px;border-top:0}

/* chart editor */
.panel{width:400px;margin-left:20px;flex:none;position:relative;background:#fff;border-radius:16px}
.p-head{height:71px;display:flex;align-items:center;padding-left:23px;border-bottom:1px solid #dadce0}
.p-icon{width:24px;height:24px;fill:#188038;flex:none}
.p-title{font-size:21.500px;margin-left:19px;color:#202124;width:281px;flex:none}
.p-close{width:25px;height:25px;margin-left:6px;fill:#3c4043}
.p-tabs{display:flex;height:50px}
.tab{font-size:18px;font-weight:400;letter-spacing:.6px;height:50px;display:flex;align-items:center;justify-content:center;color:#5f6368;padding-top:9px}
.tab.on{width:70px;margin-left:55px;color:#188038;border-bottom:3px solid #188038;border-radius:0 0 1px 1px;font-weight:500;padding-top:12px}
.tab.cust{margin-left:120px}
.p-body{height:714px;overflow:hidden;padding-left:20px}
.p-label{font-size:14.500px;color:#5f6368;line-height:20px;margin-top:27px}
.dropdown{width:340px;height:53px;margin-top:7px;background:#f1f1f1;box-shadow:0 -2px 4px rgba(0,0,0,.04),0 2px 3px rgba(0,0,0,.06);display:flex;align-items:center;padding:2px 0 0 11px}
.dd-icon{width:24px;height:24px}
.dd-text{font-size:18px;color:#3c4043;margin-left:11px;width:266px;white-space:nowrap}
.dd-caret{margin-left:0}
.check{display:flex;align-items:center;height:22px;font-size:17.700px;color:#444746}
.check span{padding-top:4px}
.first-check{margin-top:557px}
.check+.check{margin-top:16px}
.box{width:22px;height:22px;border:2px solid #5f6368;border-radius:3px;margin-right:17px;flex:none;margin-left:1px}
.p-scroll{position:absolute;left:385px;top:130px;width:10px;height:629px;border-radius:5px;background:#dadce0}

/* popup */
.popup{position:absolute;left:5px;top:235px;width:379px;height:559px;background:#fff;overflow:hidden;padding:24px 0 0 20px;box-shadow:0 2px 8px rgba(0,0,0,.35)}
.pop-scroll{position:absolute;left:363px;top:5px;width:10px;height:208px;border-radius:5px;background:#dadce0}
.pop-label{font-size:15.500px;line-height:20px;color:#3c4043}
.sect{margin-top:25px}
.sugg{display:flex;gap:5px;margin:5px 0 0 -5px}
.sg{width:169px;height:115px;border:5px solid #e0e0e0;position:relative;flex:none}
.active-sg{border-color:#5e86e8}
.badge{position:absolute;left:92px;top:78px;width:58px;height:19px;background:#4285f4;color:#fff;font-size:13px;font-weight:700;display:flex;align-items:center;justify-content:center;box-shadow:0 0 0 1px #fff}
.pop-div{height:1px;width:331px;margin-top:33px;background:#e8eaed}
.thumbs{display:grid;grid-template-columns:91px 90px 91px;gap:29px;margin-top:5px}
.pop-div+.sect{margin-top:25px}
.th{width:100%;height:63px;border:1px solid #bdbdbd;background:#fff;fill:none}
.t-a2{margin-top:13px}
.t-c{margin-top:6px}
.picked{box-shadow:0 0 0 5px #c9dafb}
.bl{fill:none;stroke:#5f94ee;stroke-width:2.200}
.rd{fill:none;stroke:#d2453a;stroke-width:2.200}
.thin{stroke-width:1}
.fb{fill:#c5daf9}
.fr{fill:#d8776d;fill-opacity:.45}

/* click + tooltip */
.click{position:absolute;left:108.500px;top:153px;width:95px;height:95px;border-radius:50%;background:rgba(11,87,208,.42);display:flex;align-items:center;justify-content:center}
.click-dot{width:45px;height:45px;border-radius:50%;background:#0450c8}
.tooltip{position:absolute;left:141px;top:235px;width:96px;height:30px;border-radius:6px;background:#202124;color:#fff;font-size:15.500px;display:flex;align-items:center;justify-content:center}

/* bottom */
.bottom{height:46px;flex:none;display:flex;align-items:center;border-top:1px solid #e1e3e1;position:relative}
.bi{width:26px;height:26px;flex:none}
.plus{margin-left:64px}
.burger{margin-left:23px}
.sheet-tab{width:113px;height:45px;margin-left:27px;background:#e1e9f7;display:flex;align-items:center;padding-left:15px;font-size:18px;font-weight:500;color:#0b57d0;letter-spacing:.6px;flex:none}
.sheet-tab .caret{margin-left:13px}
.sum{width:127px;height:37px;margin-left:1413px;background:#c4eed0;border-radius:10px;display:flex;align-items:center;padding-left:12px;font-size:18px;font-weight:400;letter-spacing:.3px;color:#0d3a20;flex:none}
.sum .caret{margin-left:11px}
.coll{margin-left:36px}
```
